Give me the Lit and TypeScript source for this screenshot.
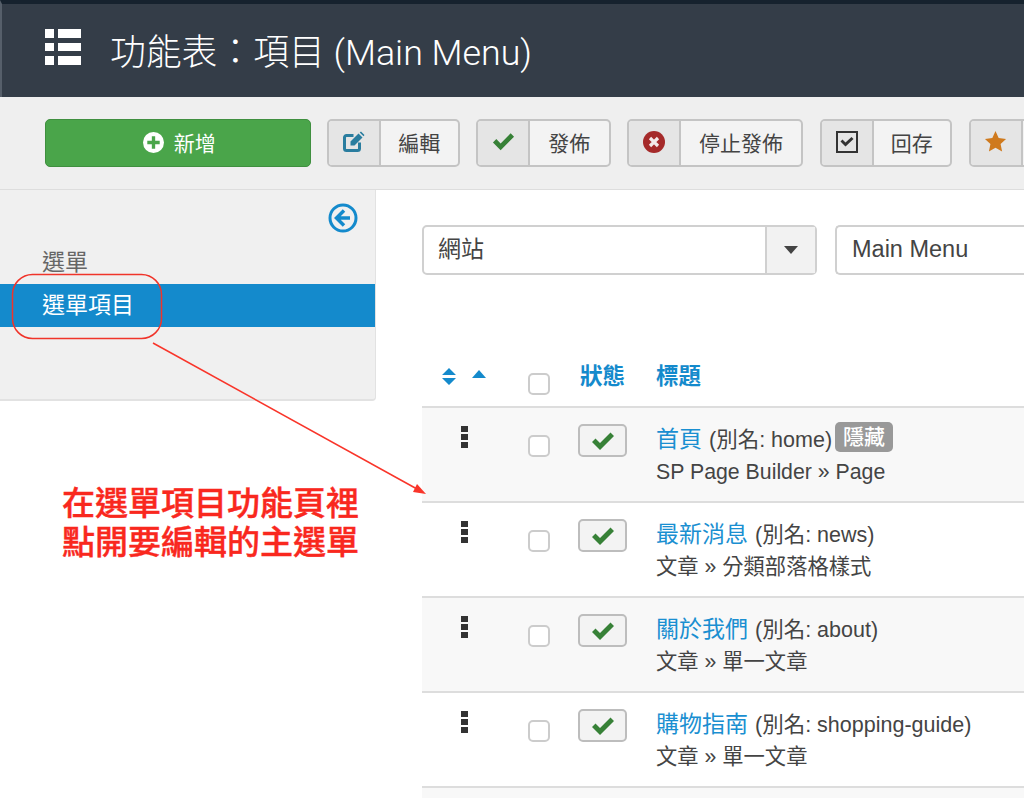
import { LitElement, html, css, svg } from "lit";
import { customElement } from "lit/decorators.js";

const check = (c: string, w = 22) => html`<svg width=${w} height=${w} viewBox="0 0 24 24"><path d="M1 13 4.500 9.500 9 14 19.500 3.500 23 7 9 21Z" fill=${c}/></svg>`;
const icons: Record<string, unknown> = {
  edit: html`<svg width="22" height="22" viewBox="0 0 22 22"><path d="M16.500 11.500V17.500a2 2 0 0 1-2 2H3.500a2 2 0 0 1-2-2V6.500a2 2 0 0 1 2-2h7" fill="none" stroke="#2a7d9f" stroke-width="3"/><path d="M7.500 10.500 15.500 2.500 19.500 6.500 11.500 14.500 7.500 14.500Z M16.700 1.500 18 .5 21.500 4 20.500 5.300Z" fill="#2a7d9f"/></svg>`,
  check: check("#378137", 23),
  x: html`<svg width="22" height="22" viewBox="0 0 22 22"><circle cx="11" cy="11" r="11" fill="#a52a2a"/><path d="M7 7l8 8M15 7l-8 8" stroke="#f3eaea" stroke-width="3.200"/></svg>`,
  box: html`<svg width="22" height="22" viewBox="0 0 22 22"><rect x="1" y="1" width="20" height="20" fill="none" stroke="#333" stroke-width="2"/><path d="M4.500 10.500 6.500 8.500 9.500 11.500 15.500 6 17.500 8 9.500 15.500Z" fill="#333"/></svg>`,
  star: html`<svg width="23" height="23" viewBox="0 0 24 24"><path d="M12 1 15.300 8.300 23 9.300 17.300 14.600 18.900 22.500 12 18.500 5.100 22.500 6.700 14.600 1 9.300 8.700 8.300Z" fill="#cf7a1e"/></svg>`,
};

const tools = [
  { i: "edit", t: "編輯", w: 132.5 },
  { i: "check", t: "發佈", w: 134.5 },
  { i: "x", t: "停止發佈", w: 176 },
  { i: "box", t: "回存", w: 132.5 },
  { i: "star", t: "", w: 140 },
];
const rows = [
  { t: "首頁", a: "home", s: "SP Page Builder » Page", hidden: true },
  { t: "最新消息", a: "news", s: "文章 » 分類部落格樣式" },
  { t: "關於我們", a: "about", s: "文章 » 單一文章" },
  { t: "購物指南", a: "shopping-guide", s: "文章 » 單一文章" },
];

@customElement("app-root")
export class AppRoot extends LitElement {
  static styles = css`
    :host { display: block; width: 1024px; height: 798px; overflow: hidden; position: relative; background: #fff; color: #444;
      font-family: "Liberation Sans", "Noto Sans CJK TC", sans-serif; font-size: 21px; }
    .header { height: 93px; border-top: 4px solid #16222e; border-left: 2px solid #565f6a; background: #343d48; color: #fff; display: flex; align-items: center; padding-left: 43px; gap: 29px; font-size: 35.800px; box-sizing: content-box; }
    .header svg { margin-top: -7px; flex: none; }
    .header h1 { all: unset; margin-top: -4px; font-family: Roboto, "Noto Sans CJK TC", sans-serif; font-weight: 300; white-space: nowrap; }
    .toolbar { background: #efefef; border-bottom: 1px solid #ddd; display: flex; gap: 16.500px; padding: 22px 0 0 45px; box-sizing: border-box; height: 93px; white-space: nowrap; }
    .new { width: 265.500px; height: 48px; box-sizing: border-box; background: #4aa54a; border: 1px solid #3f8f3f; border-radius: 5px; color: #fff; display: flex; align-items: center; justify-content: center; gap: 10px; flex: none; padding: 0 0 2px 3px; }
    .tool { height: 48px; flex: none; box-sizing: border-box; display: flex; border: 2px solid #c4c4c4; border-radius: 5px; background: #f3f3f3; color: #444; overflow: hidden; }
    .tool .ic { width: 52px; flex: none; background: #e5e5e5; border-right: 2px solid #c4c4c4; display: flex; align-items: center; justify-content: center; padding-bottom: 3px; box-sizing: border-box; }
    .tool .tx { flex: 1; text-align: center; line-height: 45px; }
    .body { display: flex; align-items: flex-start; }
    .side { width: 376px; height: 211px; flex: none; box-sizing: border-box; background: #f0f0f0; border-right: 1px solid #e2e2e2; border-bottom: 2px solid #e2e2e2; border-radius: 0 0 4px 0; position: relative; padding-top: 51px; font-size: 23px; color: #666; }
    .back { display: flex; justify-content: flex-end; position: absolute; top: 13px; right: 17px; }
    .side div.it { height: 43px; line-height: 42px; padding-left: 42px; }
    .side div.active { background: #148acc; color: #fff; }
    .main { flex: 1; padding: 35px 0 0 46px; min-width: 0; }
    .filters { display: flex; gap: 18px; height: 50px; }
    .sel { width: 395px; flex: none; box-sizing: border-box; border: 2px solid #d0d0d0; border-radius: 5px; display: flex; }
    .sel span { flex: 1; padding-left: 14px; line-height: 44px; font-size: 23px; }
    .sel i { width: 48px; background: #f2f2f2; border-left: 2px solid #d0d0d0; display: flex; align-items: center; justify-content: center; }
    .sel2 { flex: 1; box-sizing: border-box; border: 2px solid #d0d0d0; border-right: 0; border-radius: 5px 0 0 5px; padding-left: 15px; line-height: 44px; font-size: 23.500px; }
    .grid { display: grid; grid-template-columns: 106px 50px 78px 1fr; }
    .head { margin-top: 81px; border-bottom: 2px solid #ddd; height: 50px; color: #148acc; font-weight: 700; font-size: 22.500px; }
    .head a { line-height: 42px; margin-left: 2px; }
    .head a.t { margin-left: 0; }
    .sort { display: flex; gap: 16px; padding: 12px 0 0 20px; align-items: flex-start; }
    .row { height: 93px; border-bottom: 2px solid #ddd; }
    .row.odd { background: #f8f8f8; }
    .row.tail { height: 20px; border: 0; background: #f8f8f8; }
    .handle { padding: 18px 0 0 39px; display: flex; flex-direction: column; gap: 2px; }
    .handle b { width: 7px; height: 6px; background: #333; display: block; }
    .cb { width: 22px; height: 22px; box-sizing: border-box; border: 2px solid #ccc; border-radius: 5px; background: #fff; }
    .row .cb { margin-top: 27px; }
    .head .cb { margin-top: 17px; }
    .st { margin-top: 16px; width: 49px; height: 33px; box-sizing: border-box; border: 2px solid #bdbdbd; border-radius: 5px; background: #f3f3f3; display: flex; align-items: center; justify-content: center; }
    .ti { padding-top: 10px; white-space: nowrap; }
    .l1 { display: flex; align-items: center; height: 38px; font-size: 21.500px; }
    .l1 a { color: #1a8fd1; font-size: 23px; margin-right: 7px; }
    .l2 { line-height: 32px; font-size: 21.300px; color: #444; }
    .tag { background: #999; color: #fff; border-radius: 5px; padding: 0 8px; height: 30px; line-height: 30px; margin-left: 3px; font-size: 21px; font-weight: 500; }
    .ann { position: absolute; left: 0; top: 0; pointer-events: none; }
    .note { position: absolute; left: 62px; top: 484px; color: #f9281e; font-size: 33px; font-weight: 500; line-height: 39px; white-space: nowrap; -webkit-text-stroke: 0.4px #f9281e; }
  `;

  render() {
    return html`
      <div class="header">
        <svg width="36" height="36" viewBox="0 0 36 36" fill="#fff">
          <rect width="9" height="9"/><rect x="13" width="23" height="9"/>
          <rect y="14" width="9" height="8"/><rect x="13" y="14" width="23" height="8"/>
          <rect y="27" width="9" height="9"/><rect x="13" y="27" width="23" height="9"/>
        </svg>
        <h1>功能表：項目 (Main Menu)</h1>
      </div>
      <div class="toolbar">
        <div class="new">
          <svg width="21" height="21" viewBox="0 0 22 22"><circle cx="11" cy="11" r="11" fill="#fff"/><path d="M11 4.500v13M4.500 11h13" stroke="#4aa54a" stroke-width="3.500"/></svg>
          新增
        </div>
        ${tools.map((b) => html`<div class="tool" style="width:${b.w}px"><div class="ic">${icons[b.i]}</div>${b.t ? html`<div class="tx">${b.t}</div>` : ""}</div>`)}
      </div>
      <div class="body">
        <div class="side">
          <div class="back"><svg width="30" height="30" viewBox="0 0 30 30"><circle cx="15" cy="15" r="13" fill="none" stroke="#148acc" stroke-width="3"/><path d="M16 7.500 8.500 15 16 22.500M9 15h13" fill="none" stroke="#148acc" stroke-width="3.500"/></svg></div>
          <div class="it">選單</div>
          <div class="it active">選單項目</div>
        </div>
        <div class="main">
          <div class="filters">
            <div class="sel"><span>網站</span><i><svg width="14" height="8" viewBox="0 0 16 9"><path d="M0 0h16L8 9Z" fill="#444"/></svg></i></div>
            <div class="sel2">Main Menu</div>
          </div>
          <div class="grid head">
            <div class="sort">
              <svg width="14" height="17" viewBox="0 0 14 17" fill="#148acc"><path d="M7 0 14 7H0ZM0 10H14L7 17Z"/></svg>
              <svg width="14" height="8" viewBox="0 0 14 8" style="margin-top:2px" fill="#148acc"><path d="M7 0 14 8H0Z"/></svg>
            </div>
            <div class="cb"></div>
            <a>狀態</a>
            <a class="t">標題</a>
          </div>
          ${rows.map((r, i) => html`
            <div class="grid row ${i % 2 ? "" : "odd"}">
              <div class="handle"><b></b><b></b><b></b></div>
              <div class="cb"></div>
              <div class="st">${check("#378137", 24)}</div>
              <div class="ti">
                <div class="l1"><a>${r.t}</a>(別名: ${r.a})${r.hidden ? html`<span class="tag">隱藏</span>` : ""}</div>
                <div class="l2">${r.s}</div>
              </div>
            </div>`)}
          <div class="row tail"></div>
        </div>
      </div>
      <svg class="ann" width="1024" height="798" viewBox="0 0 1024 798">
        ${svg`<rect x="12.500" y="274.500" width="149" height="64" rx="20" fill="none" stroke="#f0342a" stroke-width="1.500"/>
        <path d="M153 343 417 489" stroke="#f9352a" stroke-width="1.500"/>
        <path d="M426 494 413 492 417 484Z" fill="#f9352a"/>`}
      </svg>
      <div class="note">在選單項目功能頁裡<br />點開要編輯的主選單</div>
    `;
  }
}
